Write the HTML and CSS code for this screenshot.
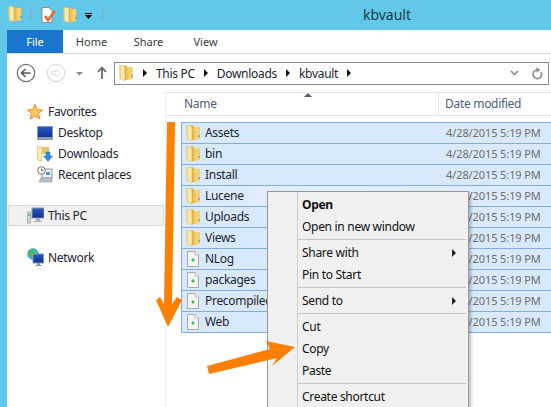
FILE: index.html
```html
<!DOCTYPE html>
<html lang="en">
<head>
  <meta charset="UTF-8">
  <title>kbvault</title>
  <link rel="stylesheet" href="styles.css">
</head>
<body>
  <svg class="defs" width="0" height="0">
    <defs>
      <linearGradient id="folderFront" x1="0" y1="0" x2="1" y2="0">
        <stop offset="0" stop-color="#f0d070"/>
        <stop offset="0.6" stop-color="#fff0b0"/>
        <stop offset="1" stop-color="#f4dc90"/>
      </linearGradient>
      <linearGradient id="folderBack" x1="0" y1="0" x2="1" y2="0">
        <stop offset="0" stop-color="#c08e28"/>
        <stop offset="0.3" stop-color="#eac058"/>
        <stop offset="0.8" stop-color="#f8da78"/>
        <stop offset="1" stop-color="#e4b850"/>
      </linearGradient>
      <linearGradient id="screen" x1="0" y1="0" x2="0" y2="1">
        <stop offset="0" stop-color="#2a5cc0"/>
        <stop offset="1" stop-color="#0c2c90"/>
      </linearGradient>
      <symbol id="folder" viewBox="0 0 14 16">
        <path d="M5 0.5 H8 L8.5 2 H13.5 V14 L5.5 15.5 Z" fill="url(#folderBack)"/>
        <path d="M0.5 0.5 H5 L6 2 V15.5 L1 14 Z" fill="url(#folderFront)" stroke="#dcbc68" stroke-width="0.5"/>
        <rect x="12.6" y="10" width="1" height="2" fill="#4a90d0"/>
      </symbol>
      <symbol id="doc" viewBox="0 0 14 16">
        <path d="M1.5 0.5 H9 L12.5 4 V15.5 H1.5 Z" fill="#f6f6f6" stroke="#a8a8a8"/>
        <path d="M9 0.5 V4 H12.5" fill="#ffffff" stroke="#b8b8b8"/>
        <rect x="4" y="6" width="6" height="6" fill="#fff" stroke="#dcdcdc" stroke-width="0.5"/>
        <path d="M7 7.2 V10.8 M5.2 9 H8.8" stroke="#18a838" stroke-width="1.2"/>
      </symbol>
    </defs>
  </svg>

  <div class="window">
    <header class="titlebar">
      <svg class="qat-folder" width="14" height="16"><use href="#folder"/></svg>
      <span class="qat-sep"></span>
      <svg class="qat-doc" width="15" height="16" viewBox="0 0 15 16">
        <path d="M1 0.5 H8 L11 3.5 V15.5 H1 Z" fill="#fafafa" stroke="#8a8a8a"/>
        <path d="M4 9 L7 13 L14 4" fill="none" stroke="#e8693a" stroke-width="2.6"/>
      </svg>
      <svg class="qat-folder2" width="14" height="16"><use href="#folder"/></svg>
      <svg class="qat-drop" width="7" height="6" viewBox="0 0 7 6">
        <rect x="0" y="0" width="7" height="1" fill="#000"/>
        <path d="M0 2 H7 L3.5 6 Z" fill="#000"/>
      </svg>
      <span class="qat-sep qat-sep2"></span>
      <span class="title">kbvault</span>
    </header>

    <main class="explorer">
      <nav class="tabs">
        <span class="tab-file">File</span>
        <span class="tab">Home</span>
        <span class="tab">Share</span>
        <span class="tab">View</span>
      </nav>

      <div class="addressrow">
        <svg class="navicons" width="100" height="22" viewBox="0 0 100 22">
          <circle cx="19" cy="11" r="8.7" fill="#fff" stroke="#6f6f6f" stroke-width="1.2"/>
          <path d="M23.5 11 H14.5 M18.5 7 L14.5 11 L18.5 15" fill="none" stroke="#5a5a5a" stroke-width="1.6"/>
          <circle cx="49" cy="11" r="8.7" fill="#fff" stroke="#dedede" stroke-width="1.2"/>
          <path d="M44.5 9.5 H49 V7 L53.5 11 L49 15 V12.5 H44.5 Z" fill="none" stroke="#dedede"/>
          <path d="M69 10 H76 L72.5 13.5 Z" fill="#8a8a8a"/>
          <path d="M95 17 V6 M91 10 L95 5.5 L99 10" fill="none" stroke="#6a6a6a" stroke-width="1.8"/>
        </svg>
        <div class="addressbox">
          <svg class="addr-folder" width="14" height="16"><use href="#folder"/></svg>
          <span class="crumb-arrow first"></span>
          <span class="crumb">This PC</span>
          <span class="crumb-arrow"></span>
          <span class="crumb">Downloads</span>
          <span class="crumb-arrow"></span>
          <span class="crumb">kbvault</span>
          <span class="crumb-arrow"></span>
          <svg class="chevron" width="9" height="6" viewBox="0 0 9 6">
            <path d="M1 1 L4.5 4.5 L8 1" fill="none" stroke="#8c8c8c" stroke-width="1.6"/>
          </svg>
          <svg class="refresh" width="12" height="13" viewBox="0 0 12 13">
            <path d="M10 5 A4.3 4.3 0 1 1 6 3" fill="none" stroke="#8c8c8c" stroke-width="1.6"/>
            <path d="M5.5 0 L9.5 3 L5.5 5.5 Z" fill="#8c8c8c"/>
          </svg>
        </div>
      </div>

      <div class="panes">
        <aside class="sidebar">
          <div class="nav-head">
            <svg width="16" height="16" viewBox="0 0 16 16">
              <path d="M8 0.5 L10.2 5.6 L15.6 6 L11.4 9.5 L12.8 15 L8 12 L3.2 15 L4.6 9.5 L0.4 6 L5.8 5.6 Z" fill="#fbc860" stroke="#ee8a30"/>
            </svg>
            Favorites
          </div>
          <div class="nav-sub">
            <svg width="16" height="14" viewBox="0 0 16 14">
              <rect x="0.5" y="0.5" width="15" height="12" fill="url(#screen)" stroke="#8a98a8"/>
              <rect x="0" y="11" width="16" height="3" fill="#8e9aa6"/>
            </svg>
            Desktop
          </div>
          <div class="nav-sub">
            <svg width="16" height="18" viewBox="0 0 16 18">
              <path d="M0.5 1 L5 2 L5 16 L0.5 15 Z" fill="#fbeeb0" stroke="#d8b860" stroke-width="0.6"/>
              <path d="M5 2 H12 V9 H5 Z" fill="#e4c468"/>
              <path d="M9 7 H13 V11 H15.5 L11 16.5 L6.5 11 H9 Z" fill="#2f8be0" stroke="#1c6cc0" stroke-width="0.5"/>
            </svg>
            Downloads
          </div>
          <div class="nav-sub">
            <svg width="16" height="17" viewBox="0 0 16 17">
              <rect x="5" y="3" width="10" height="9" fill="#eef3f8" stroke="#8a98a8"/>
              <rect x="9" y="6" width="4" height="3" fill="#4a9ad8"/>
              <circle cx="4.5" cy="4.5" r="3.8" fill="#f4f4f4" stroke="#777"/>
              <path d="M4.5 2.5 V4.5 H6.5" fill="none" stroke="#444" stroke-width="0.8"/>
              <path d="M2 16 L4 12 H15 V16 Z" fill="#b8c0c8" stroke="#8a98a8" stroke-width="0.6"/>
            </svg>
            Recent places
          </div>
          <div class="nav-head nav-selected">
            <svg width="17" height="17" viewBox="0 0 17 17">
              <rect x="0.5" y="5" width="3" height="11" fill="#d4d8dc" stroke="#8a9096" stroke-width="0.6"/>
              <rect x="1.4" y="7" width="1.2" height="2" fill="#30b030"/>
              <rect x="5" y="1" width="12" height="10" fill="url(#screen)" stroke="#8a98a8"/>
              <path d="M9 11 H13 V14 H15 V15 H7 V14 H9 Z" fill="#a8b0b8"/>
            </svg>
            This PC
          </div>
          <div class="nav-head nav-network">
            <svg width="17" height="19" viewBox="0 0 17 19">
              <circle cx="6" cy="6" r="5.4" fill="#3ab0d8" stroke="#3a8898" stroke-width="0.6"/>
              <path d="M2 3 L6 2 L8 5 L5 9 L2 7 Z" fill="#58b848"/>
              <rect x="6" y="6" width="10.5" height="9" fill="url(#screen)" stroke="#8a98a8"/>
              <path d="M10 15 H13 V17 H14.5 V18 H8.5 V17 H10 Z" fill="#8a98a8"/>
            </svg>
            Network
          </div>
        </aside>

        <section class="files">
          <div class="colheader">
            <span class="col-name">Name</span>
            <span class="col-date">Date modified</span>
            <span class="sort-arrow"></span>
          </div>
          <div class="rows">
            <div class="row"><svg class="row-icon" width="14" height="16"><use href="#folder"/></svg><span class="row-name">Assets</span><span class="row-date">4/28/2015 5:19 PM</span></div>
            <div class="row"><svg class="row-icon" width="14" height="16"><use href="#folder"/></svg><span class="row-name">bin</span><span class="row-date">4/28/2015 5:19 PM</span></div>
            <div class="row"><svg class="row-icon" width="14" height="16"><use href="#folder"/></svg><span class="row-name">Install</span><span class="row-date">4/28/2015 5:19 PM</span></div>
            <div class="row row-hot"><svg class="row-icon" width="14" height="16"><use href="#folder"/></svg><span class="row-name">Lucene</span><span class="row-date">4/28/2015 5:19 PM</span></div>
            <div class="row"><svg class="row-icon" width="14" height="16"><use href="#folder"/></svg><span class="row-name">Uploads</span><span class="row-date">4/28/2015 5:19 PM</span></div>
            <div class="row"><svg class="row-icon" width="14" height="16"><use href="#folder"/></svg><span class="row-name">Views</span><span class="row-date">4/28/2015 5:19 PM</span></div>
            <div class="row"><svg class="row-icon" width="14" height="16"><use href="#doc"/></svg><span class="row-name">NLog</span><span class="row-date">4/28/2015 5:19 PM</span></div>
            <div class="row"><svg class="row-icon" width="14" height="16"><use href="#doc"/></svg><span class="row-name">packages</span><span class="row-date">4/28/2015 5:19 PM</span></div>
            <div class="row"><svg class="row-icon" width="14" height="16"><use href="#doc"/></svg><span class="row-name">Precompiled</span><span class="row-date">4/28/2015 5:19 PM</span></div>
            <div class="row"><svg class="row-icon" width="14" height="16"><use href="#doc"/></svg><span class="row-name">Web</span><span class="row-date">4/28/2015 5:19 PM</span></div>
          </div>
        </section>
      </div>
    </main>

    <ul class="menu">
      <li class="menu-item menu-default">Open</li>
      <li class="menu-item">Open in new window</li>
      <li class="menu-sep"></li>
      <li class="menu-item has-sub">Share with</li>
      <li class="menu-item">Pin to Start</li>
      <li class="menu-sep"></li>
      <li class="menu-item has-sub">Send to</li>
      <li class="menu-sep"></li>
      <li class="menu-item">Cut</li>
      <li class="menu-item">Copy</li>
      <li class="menu-item">Paste</li>
      <li class="menu-sep"></li>
      <li class="menu-item">Create shortcut</li>
    </ul>

    <!-- orange annotation arrows drawn on top of the screenshot -->
    <svg class="annotations" width="551" height="407" viewBox="0 0 551 407">
      <path d="M167 122 H175 L172 304 L177 297 L182 300 L168 327 L156 300 L160 297 L164 304 Z" fill="#ff8000"/>
      <path d="M207 366 L270 349 L266 341 L295 347 L272 366 L277 358 L209 374 Z" fill="#ff8000"/>
    </svg>
  </div>
</body>
</html>
```

FILE: styles.css
```css
* {
  box-sizing: border-box;
}
body {
  margin: 0;
  font-family: "Noto Sans", "Open Sans", sans-serif;
  font-size: 12px;
  letter-spacing: -0.3px;
  color: #1c2430;
}
.defs {
  position: absolute;
}
.window {
  position: relative;
  width: 551px;
  height: 407px;
  overflow: hidden;
  background-color: #62c8ea;
  padding-left: 7px;
  display: flex;
  flex-direction: column;
}

/* title bar */
.titlebar {
  height: 30px;
  flex: none;
  display: flex;
  align-items: center;
  padding-left: 1px;
  position: relative;
}
.qat-folder {
  margin-top: -2px;
}
.qat-sep {
  width: 1px;
  height: 12px;
  background-color: #8aa4b0;
  margin-left: 8px;
  margin-top: -2px;
}
.qat-sep2 {
  margin-left: 10px;
}
.qat-doc {
  margin-left: 10px;
  margin-top: -1px;
}
.qat-folder2 {
  margin-left: 7px;
  margin-top: -1px;
}
.qat-drop {
  margin-left: 8px;
  margin-top: 2px;
}
.title {
  margin-left: auto;
  padding-right: 140px;
  font-size: 14px;
  letter-spacing: 0;
  color: #1a3a4c;
  margin-top: -2px;
}

/* ribbon tabs */
.explorer {
  flex: 1;
  background-color: #fff;
  display: flex;
  flex-direction: column;
  min-height: 0;
}
.tabs {
  height: 24px;
  flex: none;
  display: flex;
  border-bottom: 1px solid #dcdcdc;
  font-size: 11px;
  letter-spacing: 0;
}
.tab-file {
  width: 56px;
  height: 23px;
  background-color: #1a75ce;
  color: #fff;
  display: flex;
  align-items: center;
  justify-content: center;
}
.tab {
  width: 57px;
  display: flex;
  align-items: center;
  justify-content: center;
  color: #3a3a40;
}

/* address row */
.addressrow {
  height: 38px;
  flex: none;
  display: flex;
  align-items: center;
}
.navicons {
  flex: none;
}
.addressbox {
  margin-left: 7px;
  width: 435px;
  height: 23px;
  border: 1px solid #8c8c8c;
  display: flex;
  align-items: center;
  padding-left: 4px;
  padding-right: 5px;
}
.crumb {
  color: #1c2430;
}
.crumb-arrow {
  width: 0;
  height: 0;
  margin: 0 9px;
  border-left: 4px solid #111;
  border-top: 4px solid transparent;
  border-bottom: 4px solid transparent;
}
.crumb-arrow.first {
  margin-left: 10px;
}
.chevron {
  margin-left: auto;
}
.refresh {
  margin-left: 12px;
}

/* panes */
.panes {
  flex: 1;
  display: flex;
  min-height: 0;
}
.sidebar {
  width: 159px;
  flex: none;
  padding-top: 9px;
  border-right: 1px solid #f0f0f0;
}
.nav-head,
.nav-sub {
  height: 21px;
  display: flex;
  align-items: center;
  gap: 5px;
  white-space: nowrap;
}
.nav-head {
  padding-left: 20px;
}
.nav-sub {
  padding-left: 30px;
}
.nav-selected {
  margin-top: 20px;
  margin-left: 1px;
  width: 156px;
  padding-left: 18px;
  gap: 4px;
  background-color: #f0f0f0;
  border: 1px solid #d9d9d9;
}
.nav-network {
  margin-top: 21px;
  gap: 4px;
}

/* file list */
.files {
  flex: 1;
  min-width: 0;
  overflow: hidden;
}
.colheader {
  position: relative;
  height: 24px;
  display: flex;
  align-items: center;
  border-top: 1px solid #e5e5e5;
  border-bottom: 1px solid #e5e5e5;
  color: #4c607a;
  padding-left: 18px;
}
.col-name {
  width: 254px;
  padding-bottom: 1px;
}
.col-date {
  height: 100%;
  display: flex;
  align-items: center;
  padding-left: 6px;
  padding-bottom: 1px;
  border-left: 1px solid #e5e5e5;
  white-space: nowrap;
}
.sort-arrow {
  position: absolute;
  left: 138px;
  top: 0;
  width: 0;
  height: 0;
  border-left: 4px solid transparent;
  border-right: 4px solid transparent;
  border-bottom: 4px solid #4c607a;
}
.rows {
  margin: 6px 0 0 15px;
  border-top: 1px solid #84acdd;
  border-left: 1px solid #84acdd;
}
.row {
  height: 21px;
  display: flex;
  align-items: center;
  background-color: #d9e9fc;
  border-bottom: 1px solid #84acdd;
  padding-left: 4px;
  padding-bottom: 1px;
  white-space: nowrap;
}
.row-hot {
  background: linear-gradient(to right, #d9e9fc, #e6f0fd 40%, #d9e9fc);
}
.row-icon {
  flex: none;
}
.row-name {
  width: 241px;
  margin-left: 5px;
  flex: none;
  overflow: hidden;
}
.row-date {
  color: #6d6d6d;
  font-size: 11px;
  letter-spacing: -0.1px;
}

/* context menu */
.menu {
  position: absolute;
  left: 267px;
  top: 191px;
  width: 202px;
  height: 230px;
  margin: 0;
  padding: 2px;
  list-style: none;
  border: 1px solid #979797;
  background: linear-gradient(to right, #f0f0f0 29px, #cfcfcf 29px, #cfcfcf 30px, #f0f0f0 30px);
  box-shadow: 2px 2px 3px rgba(0, 0, 0, 0.25);
}
.menu-item {
  position: relative;
  height: 22px;
  line-height: 22px;
  padding-left: 32px;
  color: #111;
  white-space: nowrap;
}
.menu-default {
  font-weight: bold;
}
.has-sub::after {
  content: "";
  position: absolute;
  right: 10px;
  top: 7px;
  border-left: 4px solid #222;
  border-top: 4px solid transparent;
  border-bottom: 4px solid transparent;
}
.menu-sep {
  height: 4px;
  margin-left: 27px;
  border-top: 1px solid #c4c4c4;
  margin-top: 1px;
  margin-bottom: -1px;
}

.annotations {
  position: absolute;
  left: 0;
  top: 0;
}
```
